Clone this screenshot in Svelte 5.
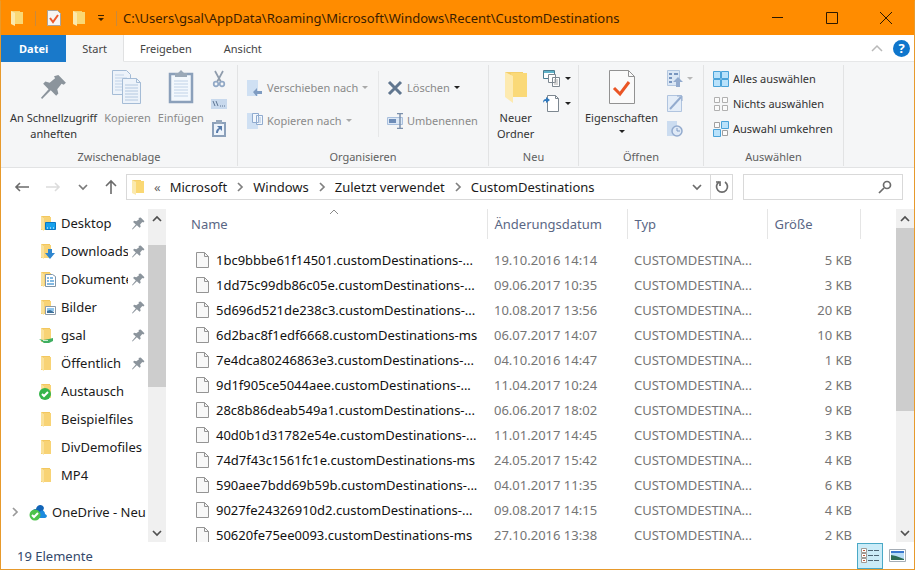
<script lang="ts">
  const title = 'C:\\Users\\gsal\\AppData\\Roaming\\Microsoft\\Windows\\Recent\\CustomDestinations'
  const crumbs = ['Microsoft', 'Windows', 'Zuletzt verwendet', 'CustomDestinations']

  const places = [
    { name: 'Desktop', badge: 'desktop', pinned: true },
    { name: 'Downloads', badge: 'download', pinned: true },
    { name: 'Dokumente', badge: 'document', pinned: true },
    { name: 'Bilder', badge: 'picture', pinned: true },
    { name: 'gsal', badge: 'network', pinned: true },
    { name: 'Öffentlich', badge: '', pinned: true },
    { name: 'Austausch', badge: 'synced', pinned: false },
    { name: 'Beispielfiles', badge: '', pinned: false },
    { name: 'DivDemofiles', badge: '', pinned: false },
    { name: 'MP4', badge: '', pinned: false }
  ]

  const files = [
    { name: '1bc9bbbe61f14501.customDestinations-...', date: '19.10.2016 14:14', size: '5 KB' },
    { name: '1dd75c99db86c05e.customDestinations-...', date: '09.06.2017 10:35', size: '3 KB' },
    { name: '5d696d521de238c3.customDestinations-...', date: '10.08.2017 13:56', size: '20 KB' },
    { name: '6d2bac8f1edf6668.customDestinations-ms', date: '06.07.2017 14:07', size: '10 KB' },
    { name: '7e4dca80246863e3.customDestinations-...', date: '04.10.2016 14:47', size: '1 KB' },
    { name: '9d1f905ce5044aee.customDestinations-...', date: '11.04.2017 10:24', size: '2 KB' },
    { name: '28c8b86deab549a1.customDestinations-...', date: '06.06.2017 18:02', size: '9 KB' },
    { name: '40d0b1d31782e54e.customDestinations-...', date: '11.01.2017 14:45', size: '3 KB' },
    { name: '74d7f43c1561fc1e.customDestinations-ms', date: '24.05.2017 15:42', size: '4 KB' },
    { name: '590aee7bdd69b59b.customDestinations-...', date: '04.01.2017 11:35', size: '6 KB' },
    { name: '9027fe24326910d2.customDestinations-...', date: '09.08.2017 14:15', size: '4 KB' },
    { name: '50620fe75ee0093.customDestinations-ms', date: '27.10.2016 13:38', size: '2 KB' }
  ]

  let search = $state('')
</script>

{#snippet folder()}
  <svg width="14" height="18" viewBox="0 0 14 18">
    <path d="M1 2h9v13H1z" fill="#f5cf6c" />
    <path d="M4 3h9v12H4z" fill="#fad874" />
    <path d="M1 2l4 2v13l-4-2z" fill="#fbe9ad" />
  </svg>
{/snippet}

{#snippet caret(color: string)}
  <svg class="caret" width="6" height="3" viewBox="0 0 6 3"><path d="M0 0h6L3 3z" fill={color} /></svg>
{/snippet}

{#snippet chevron(dir: string, color: string)}
  <svg width="12" height="12" viewBox="0 0 12 12" fill="none" stroke={color} stroke-width="1.7">
    {#if dir === 'up'}
      <path d="M2 8l4-4 4 4" />
    {:else if dir === 'down'}
      <path d="M2 4l4 4 4-4" />
    {:else}
      <path d="M4 2l4 4-4 4" />
    {/if}
  </svg>
{/snippet}

{#snippet pin(size: number)}
  <svg width={size} height={size} viewBox="0 0 24 24" fill="#8b949c">
    <path d="M16 1l7 7-2 2-2-1-4 5 1 4-2 2-5-5-8 8-1-1 7-8-5-5 2-2 4 1 5-4-1-2z" />
  </svg>
{/snippet}

{#snippet placeIcon(badge: string)}
  <svg width="18" height="18" viewBox="0 0 18 18">
    <path d="M2 2h9v14H2z" fill="#f3c75f" />
    <path d="M2 2l3 2v13l-3-2z" fill="#fae19a" />
    <path d="M5 3h7v13H5z" fill="#f8d375" />
    {#if badge === 'desktop'}
      <path d="M6.500 8.500h10v7h-10z" fill="#18a1ec" stroke="#0b77c2" />
      <path d="M8 14h1M11 14h1M14 14h1" stroke="#fff" />
    {:else if badge === 'download'}
      <path d="M9 7h4v4h3l-5 6-5-6h3z" fill="#2f86cf" />
    {:else if badge === 'document'}
      <path d="M6.500 4.500h7l3 2v10h-10z" fill="#fff" stroke="#7e94a8" />
      <path d="M8 8h2M11 8h3M8 11h2M11 11h4M8 14h7" stroke="#5ba3d9" stroke-width="1.5" />
    {:else if badge === 'picture'}
      <path d="M6.500 8.500h10v8h-10z" fill="#fff" stroke="#8c9aa8" />
      <path d="M8 10h7v3H8z" fill="#8fc6ee" />
      <path d="M8 15v-2l3-1 4 2v1z" fill="#3d719c" />
    {:else if badge === 'network'}
      <path d="M0 13l4 1 6-1 4-1v3l-4 2H5z" fill="#3fae62" />
      <path d="M4 14h5v1H4z" fill="#c9efd1" />
    {:else if badge === 'synced'}
      <circle cx="6" cy="12" r="6" fill="#35b54a" />
      <path d="M3 12l2 2 4-4" fill="none" stroke="#fff" stroke-width="2" />
    {/if}
  </svg>
{/snippet}

<div class="window">
  <header class="titlebar">
    <div class="quick">
      {@render folder()}
      <span class="bar"></span>
      <button aria-label="Eigenschaften">
        <svg width="14" height="18" viewBox="0 0 14 18">
          <path d="M.5 1.500h10l3 3v12H.5z" fill="#f7f5f2" stroke="#a8a39d" />
          <path d="M3 9l3 4 5-7" fill="none" stroke="#ee5a2b" stroke-width="2" />
        </svg>
      </button>
      <button aria-label="Neuer Ordner">{@render folder()}</button>
      <button aria-label="Symbolleiste anpassen">
        <svg width="8" height="8" viewBox="0 0 8 8"><path d="M1 1h6v1H1zM1 4h6L4 7z" fill="#3b2200" /></svg>
      </button>
      <span class="bar"></span>
    </div>
    <h1>{title}</h1>
    <div class="caption">
      <button aria-label="Minimieren">
        <svg width="12" height="12" viewBox="0 0 12 12"><path d="M0 5.500h11" stroke="#2b1800" /></svg>
      </button>
      <button aria-label="Maximieren">
        <svg width="12" height="12" viewBox="0 0 12 12"><path d="M.5.5h11v11H.5z" fill="none" stroke="#2b1800" /></svg>
      </button>
      <button aria-label="Schließen">
        <svg width="12" height="12" viewBox="0 0 12 12"><path d="M0 0l12 12M12 0L0 12" stroke="#2b1800" /></svg>
      </button>
    </div>
  </header>

  <nav class="tabs">
    <button class="file">Datei</button>
    <button class="active">Start</button>
    <button>Freigeben</button>
    <button>Ansicht</button>
    <div class="help">
      <button aria-label="Menüband minimieren">
        <svg width="12" height="12" viewBox="0 0 12 12"><path d="M1 9l5-5 5 5" fill="none" stroke="#b9b9b9" stroke-width="1.5" /></svg>
      </button>
      <button class="question" aria-label="Hilfe">?</button>
    </div>
  </nav>

  <section class="ribbon">
    <div class="group clipboard">
      <div class="tools">
        <button class="big">
          <span class="icon">{@render pin(26)}</span>
          An Schnellzugriff<br />anheften
        </button>
        <button class="big muted">
          <span class="icon">
            <svg width="30" height="34" viewBox="0 0 30 34" fill="#edf3fa" stroke="#a5bcd6">
              <path d="M.5.5h14l4 4v20H.5z" />
              <path d="M3 5h9M3 8h12M3 11h12M3 14h12M3 17h12M3 20h12" stroke="#c1d3e8" />
              <path d="M10.500 8.500h14l4 4v21h-18z" />
              <path d="M24.500 8.500v4h4" fill="none" />
              <path d="M13 15h13M13 18h13M13 21h13M13 24h13M13 27h13M13 30h13" stroke="#b3c8e0" />
            </svg>
          </span>
          Kopieren
        </button>
        <button class="big muted">
          <span class="icon">
            <svg width="26" height="34" viewBox="0 0 26 34">
              <path d="M2 4h22v28H2z" fill="#f3f8fd" stroke="#8ba0ba" stroke-width="2.500" />
              <path d="M6 11h14M6 14h14M6 17h14M6 20h14M6 23h14M6 26h14" stroke="#c0d2e7" />
              <path d="M7 3h3l3-3 3 3h3v4H7z" fill="#9aa9b8" />
            </svg>
          </span>
          Einfügen
        </button>
        <div class="stack">
          <button aria-label="Ausschneiden">
            <svg width="14" height="18" viewBox="0 0 14 18" fill="none" stroke="#8f9cac" stroke-width="1.7">
              <path d="M3 1l6 11M11 1L5 12" />
              <circle cx="4" cy="14" r="2.300" stroke="#92a9c6" />
              <circle cx="10" cy="14" r="2.300" stroke="#92a9c6" />
            </svg>
          </button>
          <button aria-label="Pfad kopieren">
            <svg width="16" height="12" viewBox="0 0 16 12">
              <path d="M0 1h16v10H0z" fill="#c8d9ed" />
              <path d="M2 3l2 5M5 3l2 5M9 8h1M11 8h1M13 8h1" stroke="#5e7694" />
            </svg>
          </button>
          <button aria-label="Verknüpfung einfügen">
            <svg width="14" height="17" viewBox="0 0 14 17">
              <path d="M1 3h12v13H1z" fill="#eef4fb" stroke="#8ba0ba" stroke-width="2" />
              <path d="M4 0h6v4H4z" fill="#98a9bd" />
              <path d="M4 13c0-3 1-4 3-5L5 6h5v5L8 9c-1 1-2 2-2 4z" fill="#587cab" />
            </svg>
          </button>
        </div>
      </div>
      <h2>Zwischenablage</h2>
    </div>

    <div class="group organize">
      <div class="tools">
        <div class="pair">
          <button class="row muted">
            <svg width="16" height="16" viewBox="0 0 16 16">
              <path d="M0 0h11v16H0z" fill="#cfe0f3" />
              <path d="M6 12l4-4v3h5v3h-5v3z" fill="#7f9cc2" />
            </svg>
            Verschieben nach {@render caret('#a9a9a9')}
          </button>
          <button class="row muted">
            <svg width="16" height="16" viewBox="0 0 16 16">
              <path d="M0 0h11v16H0z" fill="#cfe0f3" />
              <path d="M5.500.5h6v9h-6zM9.500 2.500h6v9h-6z" fill="#f2f7fc" stroke="#90abcf" />
              <path d="M11 5h3M11 7h3M11 9h3" stroke="#a9c0dd" />
            </svg>
            Kopieren nach {@render caret('#a9a9a9')}
          </button>
        </div>
        <div class="pair second">
          <button class="row muted">
            <svg width="16" height="16" viewBox="0 0 16 16"><path d="M2 2l12 12M14 2L2 14" stroke="#60768f" stroke-width="3" /></svg>
            Löschen {@render caret('#222')}
          </button>
          <button class="row muted">
            <svg width="16" height="16" viewBox="0 0 16 16">
              <path d="M.5 4.500h15v7H.5z" fill="#dce8f6" stroke="#a8bfdd" />
              <path d="M2 6h7v4H2z" fill="#6e8db8" />
              <path d="M10 .5h6M10 15.500h6M13 0v16" stroke="#7b90ac" stroke-width="1.5" />
            </svg>
            Umbenennen
          </button>
        </div>
      </div>
      <h2>Organisieren</h2>
    </div>

    <div class="group create">
      <div class="tools">
        <button class="big">
          <span class="icon">
            <svg width="24" height="34" viewBox="0 0 24 34">
              <path d="M1 2h18v25H1z" fill="#f4cf6b" />
              <path d="M7 3h16v24H7z" fill="#fad978" />
              <path d="M1 2l8 4v27l-8-6z" fill="#fdeab0" />
            </svg>
          </span>
          Neuer<br />Ordner
        </button>
        <div class="stack">
          <button class="row" aria-label="Neues Element">
            <svg width="18" height="17" viewBox="0 0 18 17" fill="#fff" stroke="#7d8790">
              <path d="M.5.5h11v8H.5z" stroke="#4b7d91" /><path d="M1 2h10" stroke="#5fb3c9" stroke-width="2" />
              <path d="M5.500 4.500h7v8h-7zM9.500 7.500h7v9h-7z" />
              <path d="M11 10h4M11 12h4M11 14h4" stroke="#aaa" />
            </svg>
            {@render caret('#222')}
          </button>
          <button class="row" aria-label="Einfacher Zugriff">
            <svg width="18" height="17" viewBox="0 0 18 17">
              <path d="M4.500.5h8l3 3v13h-11z" fill="#fff" stroke="#7d8790" />
              <path d="M12.500.5v3h3" fill="none" stroke="#7d8790" />
              <path d="M0 8c0-3 1-4 3-4V2l4 3-4 3V6C2 6 1 6 0 8z" fill="#2f78bd" />
            </svg>
            {@render caret('#222')}
          </button>
        </div>
      </div>
      <h2>Neu</h2>
    </div>

    <div class="group open">
      <div class="tools">
        <button class="big">
          <span class="icon">
            <svg width="28" height="34" viewBox="0 0 28 34">
              <path d="M1.500.5h19l6 6v27h-25z" fill="#fafafa" stroke="#929292" />
              <path d="M20.500.5v6h6" fill="none" stroke="#929292" />
              <path d="M6 18l6 6 9-12" fill="none" stroke="#ea5525" stroke-width="3" />
            </svg>
          </span>
          Eigenschaften<br />{@render caret('#222')}
        </button>
        <div class="stack">
          <button class="row" aria-label="Öffnen">
            <svg width="16" height="17" viewBox="0 0 16 17">
              <path d="M.5.5h12v15H.5z" fill="#dbe7f5" stroke="#b3c7e0" />
              <path d="M2 3h3v2H2zM2 7h3v2H2zM2 11h3v2H2zM7 3h4v2H7z" fill="#7895bf" />
              <path d="M11 7l5 5h-3v5H9v-5H6z" fill="#93abce" />
            </svg>
            {@render caret('#b8b8b8')}
          </button>
          <button aria-label="Bearbeiten">
            <svg width="16" height="17" viewBox="0 0 16 17">
              <path d="M.5.5h14v16H.5z" fill="#e4edf8" stroke="#b0c4df" />
              <path d="M3 14L14 2" stroke="#93abce" stroke-width="2" /><path d="M10 1h5v5" fill="none" stroke="#93abce" />
            </svg>
          </button>
          <button aria-label="Verlauf">
            <svg width="16" height="17" viewBox="0 0 16 17">
              <path d="M0 1h10v15H0z" fill="#cbdcf0" />
              <circle cx="10" cy="11" r="5" fill="#dfe9f6" stroke="#93abce" stroke-width="1.5" />
              <path d="M10 8v3h3" fill="none" stroke="#7f9bc4" />
            </svg>
          </button>
        </div>
      </div>
      <h2>Öffnen</h2>
    </div>

    <div class="group select">
      <div class="tools">
        <div class="stack">
          <button class="row">
            <svg width="16" height="16" viewBox="0 0 16 16" fill="#b9e2fb" stroke="#4aa3d9">
              <path d="M.5.5h7v7h-7zM8.500.5h7v7h-7zM.5 8.500h7v7h-7zM8.500 8.500h7v7h-7z" />
            </svg>
            Alles auswählen
          </button>
          <button class="row">
            <svg width="16" height="16" viewBox="0 0 16 16" fill="#fbfbfb" stroke="#b0b0b0">
              <path d="M1.500 1.500h5v5h-5zM9.500 1.500h5v5h-5zM1.500 9.500h5v5h-5zM9.500 9.500h5v5h-5z" />
            </svg>
            Nichts auswählen
          </button>
          <button class="row">
            <svg width="16" height="16" viewBox="0 0 16 16">
              <path d="M1.500 1.500h5v5h-5zM9.500 9.500h5v5h-5z" fill="#fbfbfb" stroke="#a0a0a0" />
              <path d="M8.500.5h7v7h-7zM.5 8.500h7v7h-7z" fill="#b9e2fb" stroke="#4aa3d9" />
            </svg>
            Auswahl umkehren
          </button>
        </div>
      </div>
      <h2>Auswählen</h2>
    </div>
  </section>

  <div class="address">
    <div class="arrows">
      <button aria-label="Zurück">
        <svg width="16" height="14" viewBox="0 0 16 14" fill="none" stroke="#6b6b6b" stroke-width="1.6"><path d="M6 3L2 7l4 4M2 7h13" /></svg>
      </button>
      <button aria-label="Vorwärts">
        <svg width="16" height="14" viewBox="0 0 16 14" fill="none" stroke="#dcdcdc" stroke-width="1.6"><path d="M10 3l4 4-4 4M14 7H1" /></svg>
      </button>
      <button aria-label="Zuletzt besucht">{@render chevron('down', '#7a7a7a')}</button>
      <button aria-label="Nach oben">
        <svg width="14" height="16" viewBox="0 0 14 16" fill="none" stroke="#6b6b6b" stroke-width="1.6"><path d="M2 7l5-5 5 5M7 2v13" /></svg>
      </button>
    </div>
    <div class="path">
      {@render folder()}
      <span class="back">«</span>
      {#each crumbs as crumb, i}
        {#if i > 0}{@render chevron('right', '#808080')}{/if}
        <button>{crumb}</button>
      {/each}
      <button class="drop" aria-label="Vorherige Orte">{@render chevron('down', '#6b6b6b')}</button>
      <button class="refresh" aria-label="Aktualisieren">
        <svg width="14" height="14" viewBox="0 0 14 14" fill="none" stroke="#6b6b6b" stroke-width="1.7">
          <path d="M10 2a5.500 5.500 0 1 1-6 0" /><path d="M1 2h4v4" />
        </svg>
      </button>
    </div>
    <label class="search">
      <input type="text" aria-label="Suchen" bind:value={search} />
      <svg width="14" height="14" viewBox="0 0 14 14" fill="none" stroke="#6b6b6b" stroke-width="1.7">
        <circle cx="9" cy="5" r="3.500" /><path d="M6 8l-5 5" />
      </svg>
    </label>
  </div>

  <main>
    <aside>
      <ul>
        {#each places as place}
          <li>
            <button>
              {@render placeIcon(place.badge)}
              <span class="name">{place.name}</span>
              {#if place.pinned}{@render pin(13)}{/if}
            </button>
          </li>
        {/each}
      </ul>
      <button class="drive">
        {@render chevron('right', '#9a9a9a')}
        <svg width="18" height="18" viewBox="0 0 18 18">
          <path d="M3 12c-1-4 1-6 4-6 1-5 7-5 8-1l-3 8z" fill="#1164b8" />
          <path d="M6 14c-1-4 2-6 5-5 2-3 5-1 5 2 3 1 2 4 0 4H9z" fill="#1b8ade" />
          <circle cx="6" cy="12" r="5.500" fill="#4cc24a" />
          <path d="M3 12l2 2 4-4" fill="none" stroke="#fff" stroke-width="2" />
        </svg>
        <span class="name">OneDrive - Neu</span>
      </button>
    </aside>
    <div class="scrollbar side">
      <button aria-label="Nach oben scrollen">{@render chevron('up', '#505050')}</button>
      <div class="track"><div class="thumb"></div></div>
      <button aria-label="Nach unten scrollen">{@render chevron('down', '#505050')}</button>
    </div>

    <div class="list">
      <table>
        <colgroup>
          <col />
          <col class="date" />
          <col class="type" />
          <col class="size" />
          <col class="rest" />
        </colgroup>
        <thead>
          <tr>
            <th>
              Name
              <svg class="sort" width="10" height="6" viewBox="0 0 10 6"><path d="M1 5l4-4 4 4" fill="none" stroke="#8a8a8a" /></svg>
            </th>
            <th>Änderungsdatum</th>
            <th>Typ</th>
            <th>Größe</th>
            <td></td>
          </tr>
        </thead>
        <tbody>
          {#each files as file}
            <tr>
              <td>
                <div class="entry">
                  <svg width="14" height="18" viewBox="0 0 14 18">
                    <path d="M1.500 1.500h8l4 4v11h-12z" fill="#f8f8f8" stroke="#949494" />
                    <path d="M9.500 1.500v4h4" fill="none" stroke="#949494" />
                  </svg>
                  {file.name}
                </div>
              </td>
              <td>{file.date}</td>
              <td>CUSTOMDESTINA...</td>
              <td class="right">{file.size}</td>
              <td></td>
            </tr>
          {/each}
        </tbody>
      </table>
    </div>
    <div class="scrollbar">
      <button aria-label="Liste nach oben">{@render chevron('up', '#505050')}</button>
      <div class="track"><div class="thumb"></div></div>
      <button aria-label="Liste nach unten">{@render chevron('down', '#505050')}</button>
    </div>
  </main>

  <footer>
    <span>19 Elemente</span>
    <div class="views">
      <button class="on" aria-label="Details">
        <svg width="18" height="16" viewBox="0 0 18 16">
          <path d="M.5.5h5v4h-5zM.5 5.500h5v4h-5zM.5 10.500h5v4h-5z" fill="#fff" stroke="#a09a94" />
          <path d="M2 2.500h2M2 7.500h2M2 12.500h2" stroke="#c05a3c" />
          <path d="M7 2.500h5M13 2.500h5M7 7.500h5M13 7.500h5M7 12.500h5M13 12.500h5" stroke="#4d6675" />
        </svg>
      </button>
      <button aria-label="Große Symbole">
        <svg width="17" height="13" viewBox="0 0 17 13">
          <path d="M.5.5h16v12H.5z" fill="#fff" stroke="#a5adb5" />
          <path d="M2 2h13v9H2z" fill="#b7dcf6" /><path d="M2 2h13v2H2z" fill="#3a78cf" />
          <path d="M2 11V6l5 1 8 3v1z" fill="#2d6b55" />
        </svg>
      </button>
    </div>
  </footer>
</div>

<style>
  :global(body) {
    background: #fff;
    font-family: 'Noto Sans', 'Open Sans', sans-serif;
    font-size: 13px;
    color: #1a1a1a;
  }

  .window {
    display: flex;
    flex-direction: column;
    height: 100vh;
    box-sizing: border-box;
    border: 1px solid #e79a2c;
    border-top-color: #ff8c00;
    overflow: hidden;
  }

  button {
    display: flex;
    align-items: center;
    padding: 0;
    border: 0;
    background: none;
    font: inherit;
    color: inherit;
    white-space: nowrap;
  }

  svg {
    display: block;
    flex: none;
  }

  h1,
  h2 {
    margin: 0;
    font-weight: normal;
  }

  .titlebar {
    display: flex;
    align-items: center;
    height: 34px;
    background: #ff8c00;
    color: #3b2000;
  }

  .titlebar h1 {
    flex: 1;
    font-size: 13px;
    white-space: nowrap;
  }

  .quick {
    display: flex;
    align-items: center;
    gap: 11px;
    padding: 0 6px 0 9px;
  }

  .bar {
    width: 1px;
    height: 15px;
    background: #c98a3c;
  }

  .caption {
    display: flex;
    padding-right: 1px;
  }

  .caption button {
    width: 54px;
    height: 34px;
    justify-content: center;
  }

  .tabs {
    display: flex;
    height: 27px;
    font-size: 11px;
    color: #444;
  }

  .tabs > button {
    padding: 0 16px;
    border-bottom: 1px solid #e6e7e8;
  }

  .tabs > .file {
    padding: 0 18px;
    background: #1979ca;
    border-color: #1979ca;
    color: #fff;
    font-weight: bold;
  }

  .tabs > .active {
    background: #f5f6f7;
    border-color: #f5f6f7;
    border-right: 1px solid #e0e1e2;
  }

  .help {
    display: flex;
    flex: 1;
    justify-content: flex-end;
    align-items: center;
    gap: 10px;
    padding-right: 4px;
    border-bottom: 1px solid #e6e7e8;
  }

  .question {
    width: 17px;
    height: 17px;
    justify-content: center;
    border-radius: 50%;
    background: #0f76cc;
    color: #fff;
    font-size: 13px;
    font-weight: bold;
  }

  .ribbon {
    display: flex;
    height: 105px;
    background: #f5f6f7;
    border-bottom: 1px solid #e2e3e4;
    font-size: 11px;
    line-height: 16px;
    color: #333;
  }

  .group {
    display: flex;
    flex-direction: column;
    box-sizing: border-box;
    margin: 3px 0 1px;
    border-right: 1px solid #e2e3e4;
  }

  .tools {
    display: flex;
    align-items: flex-start;
    flex: 1;
    padding-top: 4px;
  }

  h2 {
    height: 18px;
    font-size: 11px;
    line-height: 18px;
    color: #5f5f5f;
    text-align: center;
  }

  .clipboard {
    width: 237px;
  }

  .organize {
    width: 251px;
  }

  .create {
    width: 90px;
  }

  .open {
    width: 125px;
  }

  .select {
    width: 140px;
  }

  .clipboard .tools {
    padding-left: 9px;
    gap: 7px;
  }

  .organize .tools {
    padding-left: 9px;
  }

  .create .tools {
    padding-left: 8px;
    gap: 9px;
  }

  .open .tools {
    padding-left: 6px;
    gap: 9px;
  }

  .select .tools {
    padding-left: 9px;
  }

  .big {
    display: block;
    text-align: center;
  }

  .big .icon {
    display: flex;
    align-items: center;
    justify-content: center;
    height: 36px;
    margin-bottom: 5px;
  }

  .big .caret {
    margin: 4px auto 0;
  }

  .muted {
    color: #8a8a8a;
  }

  .stack {
    display: grid;
    grid-auto-rows: 25px;
    align-items: center;
    margin-top: -3px;
  }

  .clipboard .stack button {
    width: 16px;
    justify-content: center;
  }

  .row {
    gap: 4px;
  }

  .pair {
    display: grid;
    grid-auto-rows: 33px;
    align-items: center;
    width: 131px;
    margin-top: 2px;
  }

  .second {
    padding-left: 8px;
    border-left: 1px solid #e6e7e8;
    width: 100px;
  }

  .address {
    display: flex;
    align-items: center;
    height: 41px;
    box-sizing: border-box;
    padding-bottom: 4px;
  }

  .arrows {
    display: flex;
    align-items: center;
    justify-content: space-between;
    width: 104px;
    padding: 0 8px 0 13px;
  }

  .path {
    display: flex;
    flex: 1;
    align-items: center;
    gap: 7px;
    height: 24px;
    padding-left: 4px;
    border: 1px solid #d9d9d9;
  }

  .back {
    padding: 0 2px;
    color: #666;
  }

  .drop {
    margin-left: auto;
  }

  .refresh {
    width: 22px;
    height: 24px;
    justify-content: center;
    border-left: 1px solid #d9d9d9;
  }

  .search {
    display: flex;
    align-items: center;
    width: 148px;
    height: 24px;
    margin: 0 11px 0 10px;
    padding-right: 10px;
    box-sizing: content-box;
    border: 1px solid #d9d9d9;
  }

  .search input {
    flex: 1;
    min-width: 0;
    border: 0;
    padding: 0 6px;
    font: inherit;
    outline: none;
  }

  main {
    display: flex;
    flex: 1;
    min-height: 0;
  }

  aside {
    width: 147px;
    overflow: hidden;
  }

  ul {
    margin: 0 0 9px;
    padding: 0;
    list-style: none;
  }

  li button {
    width: 100%;
    height: 28px;
    gap: 4px;
    padding: 0 3px 0 38px;
  }

  .name {
    flex: 1;
    overflow: hidden;
    text-align: left;
  }

  .drive {
    width: 100%;
    height: 28px;
    padding-left: 8px;
    gap: 5px;
  }

  .drive svg:first-child {
    margin-right: 3px;
  }

  .scrollbar {
    display: flex;
    flex-direction: column;
    width: 18px;
    background: #f0f0f0;
  }

  .scrollbar button {
    height: 19px;
    justify-content: center;
  }

  .track {
    flex: 1;
  }

  .thumb {
    height: 62%;
    background: #cdcdcd;
  }

  .side .thumb {
    height: 48%;
    margin-top: 17px;
  }

  .list {
    flex: 1;
    min-width: 0;
    overflow: hidden;
    padding-left: 18px;
  }

  table {
    width: 100%;
    table-layout: fixed;
    border-collapse: collapse;
  }

  .date,
  .type {
    width: 140px;
  }

  .size {
    width: 93px;
  }

  .rest {
    width: 36px;
  }

  th {
    position: relative;
    height: 30px;
    padding: 0 7px;
    border-right: 1px solid #e5e5e5;
    font-weight: normal;
    text-align: left;
    color: #5a6785;
  }

  .sort {
    position: absolute;
    top: 0;
    left: 48%;
  }

  tbody tr:first-child td {
    height: 33px;
    padding-top: 8px;
  }

  td {
    height: 25px;
    padding: 0 7px;
    white-space: nowrap;
    color: #757575;
    box-sizing: border-box;
  }

  .entry {
    display: flex;
    align-items: center;
    gap: 7px;
    padding-left: 4px;
    color: #111;
  }

  .right {
    padding-right: 8px;
    text-align: right;
  }

  footer {
    display: flex;
    align-items: center;
    justify-content: space-between;
    height: 27px;
    padding: 0 8px 0 16px;
    color: #33496b;
  }

  .views {
    display: flex;
    gap: 6px;
  }

  .views button {
    height: 26px;
    justify-content: center;
  }

  .views .on {
    width: 26px;
    border: 1px solid #4aa9c6;
    background: #cbecf8;
  }
</style>
